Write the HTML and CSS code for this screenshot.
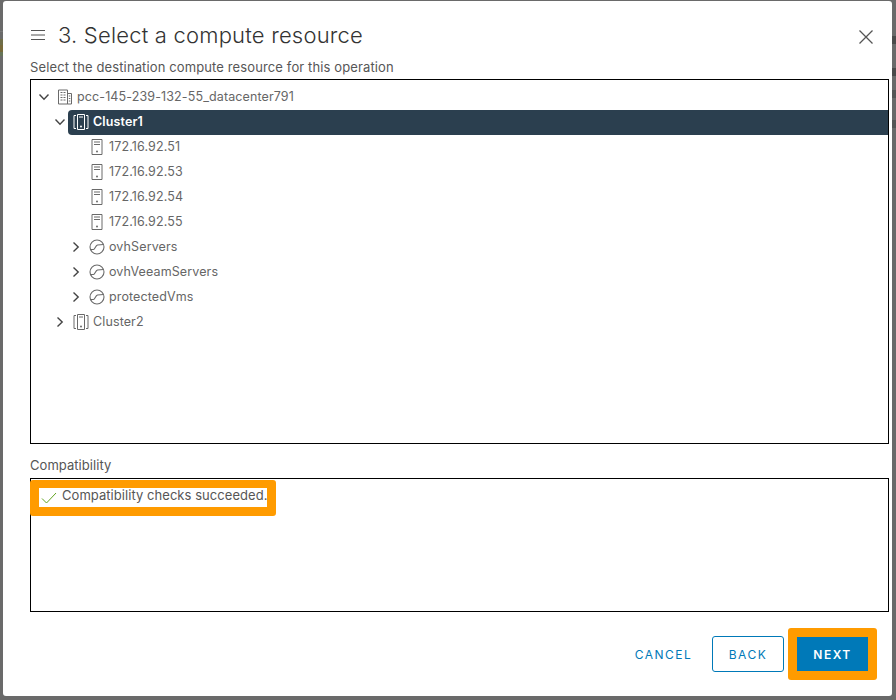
FILE: index.html
```html
<!DOCTYPE html>
<html lang="en">
<head>
<meta charset="utf-8">
<title>Select a compute resource</title>
<link rel="stylesheet" href="styles.css">
</head>
<body>
<svg class="defs" width="0" height="0" aria-hidden="true">
  <symbol id="chev-down" viewBox="0 0 12 12"><path d="M1.500 3.500 6 8.200l4.500-4.700" fill="none" stroke="currentColor" stroke-width="1.400"/></symbol>
  <symbol id="chev-right" viewBox="0 0 12 12"><path d="M3.500 1.500 8.200 6l-4.700 4.500" fill="none" stroke="currentColor" stroke-width="1.400"/></symbol>
  <symbol id="host" viewBox="0 0 16 16"><path d="M3 .5h10v15H3z" fill="none" stroke="currentColor"/><path d="M5 3h6M5 5.500h6" stroke="currentColor"/><circle cx="8" cy="12.500" r="1" fill="currentColor"/></symbol>
  <symbol id="cluster" viewBox="0 0 16 16"><path d="M3 1.500H1v13h2M13 1.500h2v13h-2" fill="none" stroke="currentColor"/><path d="M4.500 .5h7v15h-7z" fill="none" stroke="currentColor"/><path d="M6 3h4" stroke="currentColor"/><circle cx="8" cy="12.500" r="1" fill="currentColor"/></symbol>
  <symbol id="pool" viewBox="0 0 16 16"><circle cx="8" cy="8" r="7" fill="none" stroke="currentColor" stroke-width="1.100"/><path d="M1.500 10.500h3c1.500 0 2-4 4-4.500l6-.5" fill="none" stroke="currentColor" stroke-width="1.100"/></symbol>
  <symbol id="dc" viewBox="0 0 16 16"><path d="M1.500 1h9v14h-9zM10.500 4.500h4V15h-4" fill="none" stroke="currentColor"/><path d="M3.500 3.500h2M6.500 3.500h2M3.500 6h2M6.500 6h2M3.500 8.500h2M6.500 8.500h2M3.500 11h2M6.500 11h2M11.800 7h1.500M11.800 9.500h1.500M11.800 12h1.500" stroke="currentColor"/></symbol>
</svg>
<span class="backdrop-left"></span>
<span class="backdrop-right"></span>
<main class="modal">
  <header class="head">
    <div class="head-left">
      <svg class="menu" viewBox="0 0 14 12" width="14" height="12" aria-hidden="true"><path d="M0 1.500h14M0 6h14M0 10.500h14" stroke="currentColor" stroke-width="1.200"/></svg>
      <h1 class="title">3. Select a compute resource</h1>
    </div>
    <svg class="close" viewBox="0 0 14 14" width="14" height="14" aria-hidden="true"><path d="M.5.500l13 13M13.500.500l-13 13" stroke="currentColor" stroke-width="1.300"/></svg>
  </header>
  <p class="label sub">Select the destination compute resource for this operation</p>
  <section class="tree">
    <div class="row l0"><svg class="chev"><use href="#chev-down"/></svg><svg class="ico"><use href="#dc"/></svg><span>pcc-145-239-132-55_datacenter791</span></div>
    <div class="row l1"><svg class="chev"><use href="#chev-down"/></svg><div class="sel"><svg class="ico"><use href="#cluster"/></svg><span>Cluster1</span></div></div>
    <div class="row l2"><svg class="ico"><use href="#host"/></svg><span>172.16.92.51</span></div>
    <div class="row l2"><svg class="ico"><use href="#host"/></svg><span>172.16.92.53</span></div>
    <div class="row l2"><svg class="ico"><use href="#host"/></svg><span>172.16.92.54</span></div>
    <div class="row l2"><svg class="ico"><use href="#host"/></svg><span>172.16.92.55</span></div>
    <div class="row l2c"><svg class="chev"><use href="#chev-right"/></svg><svg class="ico"><use href="#pool"/></svg><span>ovhServers</span></div>
    <div class="row l2c"><svg class="chev"><use href="#chev-right"/></svg><svg class="ico"><use href="#pool"/></svg><span>ovhVeeamServers</span></div>
    <div class="row l2c"><svg class="chev"><use href="#chev-right"/></svg><svg class="ico"><use href="#pool"/></svg><span>protectedVms</span></div>
    <div class="row l1"><svg class="chev"><use href="#chev-right"/></svg><svg class="ico"><use href="#cluster"/></svg><span>Cluster2</span></div>
  </section>
  <p class="label compat-label">Compatibility</p>
  <section class="compat">
    <div class="mark">
      <svg class="check" viewBox="0 0 16 12" width="16" height="12" aria-hidden="true"><path d="M1 6.500l4.500 4.500L15 1" fill="none" stroke="#62a420" stroke-width="1"/></svg>
      <span>Compatibility checks succeeded.</span>
    </div>
  </section>
  <footer class="foot">
    <button class="btn link">CANCEL</button>
    <button class="btn outline">BACK</button>
    <span class="next-mark"><button class="btn primary">NEXT</button></span>
  </footer>
</main>
</body>
</html>
```

FILE: styles.css
```css
* { box-sizing: border-box; }
html, body { height: 100%; }
body {
  margin: 0;
  padding: 1px 4px 4px 3px;
  background: #6a6a6a;
  font-family: Inter, "Noto Sans", sans-serif;
  overflow: hidden;
}
.defs { position: absolute; }
.backdrop-left {
  position: absolute;
  left: 0;
  top: 31px;
  width: 3px;
  height: 25px;
  background: linear-gradient(#777 0 1px, #6a6a6a 1px 8px, #6f6d48 8px 14px, #77693a 14px 21px, #667558 21px 25px);
}
.backdrop-right {
  position: absolute;
  right: 0;
  top: 36px;
  width: 4px;
  height: 92px;
  background: linear-gradient(#4a4a4a 0 8px, #6a6a6a 8px 32px, #4a4a4a 32px 40px, #6a6a6a 40px 54px, #565656 54px 62px, #6a6a6a 62px 84px, #565656 84px 92px);
}
.modal {
  height: 695px;
  background: #fff;
  border-radius: 3px;
  padding: 0 3px 0 27px;
  display: flex;
  flex-direction: column;
  color: #565656;
  position: relative;
}
.head {
  height: 58px;
  flex: none;
  display: flex;
  align-items: center;
  justify-content: space-between;
  padding: 10px 16px 0 1px;
}
.head-left { display: flex; align-items: center; gap: 13px; }
.menu { color: #555; }
.close { color: #555; margin-top: 3px; }
.title {
  margin: 0;
  font-size: 22px;
  font-weight: 300;
  color: #333;
  letter-spacing: 0.2px;
}
.label {
  margin: 0;
  font-size: 13px;
  line-height: 16px;
  letter-spacing: 0.12px;
  color: #565656;
}
.sub { height: 20px; }
.tree {
  height: 365px;
  flex: none;
  border: 1px solid #000;
  padding: 5px 0 0;
}
.row {
  height: 25px;
  padding-bottom: 2px;
  display: flex;
  align-items: center;
  font-size: 12.500px;
  letter-spacing: 0.12px;
  color: #666;
}
.row span { margin-left: 4px; }
.l0 { padding-left: 7px; }
.l1 { padding-left: 23px; }
.l2 { padding-left: 58px; }
.l2c { padding-left: 39px; }
.chev { width: 12px; height: 12px; flex: none; color: #444; margin-right: 7px; }
.ico { width: 16px; height: 16px; flex: none; color: #6a6a6a; }
.sel {
  flex: 1;
  align-self: flex-start;
  height: 25px;
  display: flex;
  align-items: center;
  background: #2b3f4f;
  color: #fff;
  font-weight: 600;
  border-radius: 4px 0 0 4px;
  padding: 0 0 2px 5px;
  margin-left: -5px;
}
.sel .ico { color: #fff; }
.compat-label { margin-top: 13px; height: 21px; letter-spacing: 0.05px; }
.compat {
  height: 134px;
  flex: none;
  border: 1px solid #000;
  position: relative;
}
.mark {
  position: absolute;
  left: -1px;
  top: 1px;
  width: 246px;
  height: 36px;
  display: flex;
  align-items: center;
  gap: 5px;
  border: 9px solid #ff9b00;
  border-top-width: 8px;
  border-radius: 3px;
  background: #fff;
  font-size: 13px;
  letter-spacing: 0.05px;
  color: #565656;
  white-space: nowrap;
}
.check { margin-left: 2px; flex: none; }
.mark span { margin-top: -5px; }
.foot {
  flex: 1;
  display: flex;
  align-items: center;
  justify-content: flex-end;
  padding-right: 12px;
}
.btn {
  font-family: inherit;
  font-size: 12px;
  letter-spacing: 1.500px;
  height: 36px;
  border-radius: 3px;
  background: transparent;
  border: 1px solid transparent;
  color: #0079b8;
  padding: 0;
}
.link { width: 71px; margin-right: 13px; }
.outline { width: 72px; border-color: #0079b8; }
.next-mark {
  margin-left: 4px;
  padding: 9px;
  background: #ff9b00;
  border-radius: 3px;
  display: flex;
}
.primary {
  width: 71px;
  height: 34px;
  background: #0079b8;
  border-color: #0079b8;
  color: #fff;
  font-weight: 600;
  border-radius: 0;
}
```
